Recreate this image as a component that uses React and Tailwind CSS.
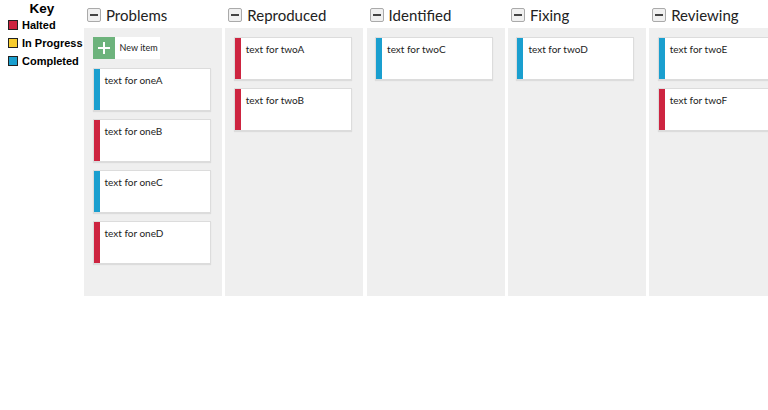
import React from "react";

const RED = "bg-[#cd2440]";
const BLUE = "bg-[#1a9fcf]";

const columns = [
  {
    title: "Problems",
    addable: true,
    cards: [
      { text: "text for oneA", color: BLUE },
      { text: "text for oneB", color: RED },
      { text: "text for oneC", color: BLUE },
      { text: "text for oneD", color: RED },
    ],
  },
  {
    title: "Reproduced",
    cards: [
      { text: "text for twoA", color: RED },
      { text: "text for twoB", color: RED },
    ],
  },
  { title: "Identified", cards: [{ text: "text for twoC", color: BLUE }] },
  { title: "Fixing", cards: [{ text: "text for twoD", color: BLUE }] },
  {
    title: "Reviewing",
    cards: [
      { text: "text for twoE", color: BLUE },
      { text: "text for twoF", color: RED },
    ],
  },
];

const legend = [
  { label: "Halted", color: "bg-[#cd2440]" },
  { label: "In Progress", color: "bg-[#f7cc2e]" },
  { label: "Completed", color: "bg-[#1a9fcf]" },
];

const Card = ({ text, color }) => (
  <div className="flex w-[118px] h-[43px] mb-[8px] bg-white border border-[#dcdcdc] shadow-[0_1px_1px_rgba(0,0,0,0.08)]">
    <div className={`w-[6px] shrink-0 ${color}`} />
    <p className="pl-[5px] pt-[5px] text-[10px] leading-[12px] text-[#222]">{text}</p>
  </div>
);

const Column = ({ title, cards, addable }) => (
  <div className="w-[138px] shrink-0 flex flex-col">
    <div className="h-[28px] flex items-center pl-[3px] pt-[2px] gap-[5px]">
      <div className="w-[14px] h-[14px] rounded-[2px] border border-[#aaa] bg-[#f0f0f0] flex items-center justify-center">
        <div className="w-[8px] h-[2px] bg-[#444]" />
      </div>
      <span className="text-[15px] text-[#222]">{title}</span>
    </div>
    <div className="h-[268px] bg-[#efefef] pl-[8.5px] pt-[9px]">
      {addable && (
        <div className="flex items-center w-[67px] h-[22px] mb-[9px] bg-white">
          <div className="w-[22px] h-[22px] bg-[#6db37c] flex items-center justify-center">
            <svg width="12" height="12" viewBox="0 0 12 12">
              <path d="M6 0v12M0 6h12" stroke="white" strokeWidth="2" />
            </svg>
          </div>
          <span className="pl-[5px] text-[9px] text-[#222]">New item</span>
        </div>
      )}
      {cards.map((c) => (
        <Card key={c.text} {...c} />
      ))}
    </div>
  </div>
);

export default function App() {
  return (
    <div className="w-[768px] h-[410px] bg-white flex overflow-hidden font-['Lato',sans-serif]">
      <div className="w-[84px] shrink-0 font-['Liberation_Sans',Arial,sans-serif] font-bold">
        <div className="text-center text-[13.5px] leading-[16px] pt-[1px] h-[16px]">Key</div>
        {legend.map((l) => (
          <div key={l.label} className="flex items-center h-[18px] pl-[8px] gap-[4px] text-[11px]">
            <div className={`w-[10px] h-[10px] border border-[#222] ${l.color}`} />
            <span>{l.label}</span>
          </div>
        ))}
      </div>
      <div className="flex gap-[3.3px]">
        {columns.map((c) => (
          <Column key={c.title} {...c} />
        ))}
      </div>
    </div>
  );
}
